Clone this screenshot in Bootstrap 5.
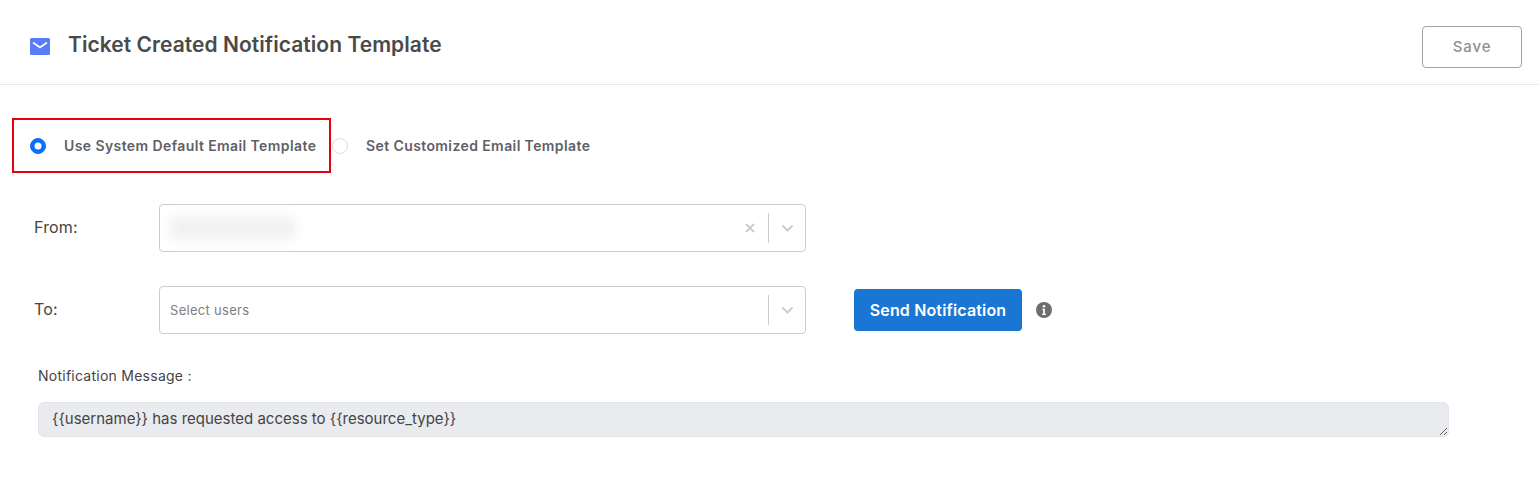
<!DOCTYPE html>
<html lang="en">
<head>
<meta charset="utf-8">
<title>Ticket Created Notification Template</title>
<link href="https://cdn.jsdelivr.net/npm/bootstrap@5.3.0/dist/css/bootstrap.min.css" rel="stylesheet">
<style>
body{font-family:"Inter","Noto Sans","Liberation Sans",sans-serif;background:#fff;color:#3f3f3f;height:500px;overflow:hidden}
.page-head{height:85px;padding:26px 17px 0 30px;border-bottom:1px solid #e9e9e9}
.head-title{font-size:21px;font-weight:600;color:#4a4a4a;margin:1px 0 0 18px;line-height:36px;letter-spacing:.05px}
.mail-ico{width:20px;height:17px;margin-top:12px;display:block}
.save-btn{width:100px;height:42px;border:1px solid #a3a3a3;border-radius:4px;background:#fff;color:#8f8f8f;font-size:15px;font-weight:500;letter-spacing:.9px;padding:0}
.radio-row{padding:33px 0 0 12px;height:119px}
.radio-box{width:319px;height:55px;border:2px solid #e8000f;padding-left:16px}
.radio-free{padding-left:1px;height:55px}
.form-check-input.radio-in{width:16px;height:16px;margin:0;flex:none;border-color:#dedede}
.radio-in:checked{background-color:#0d6efd;border-color:#0d6efd}
.radio-text{font-size:14px;font-weight:600;color:#5f5f68;margin-left:18px;letter-spacing:.4px;white-space:nowrap}
.field-row{padding-left:34px;height:48px}
.field-gap{margin-top:34px}
.field-label{width:125px;font-size:16px;color:#444;flex:none;padding-bottom:2px;letter-spacing:.15px}
.fake-select{width:647px;height:48px;border:1px solid #ccc;border-radius:4px;background:#fff;padding-left:10px;flex:none}
.blur-text{width:126px;height:22px;background:#ececec;filter:blur(6px);opacity:.75}
.ph-text{font-size:13px;color:#808080;letter-spacing:.3px;padding-top:2px}
.sel-tail{margin-left:auto;height:100%}
.sel-x{width:12px;height:12px;margin-right:12px;display:block}
.sel-sep{width:1px;height:30px;background:#ccc}
.sel-chev{width:13px;height:8px;margin:0 11px 0 12px;display:block}
.send-btn{width:168px;height:42px;margin-left:48px;background:#1976d2;border:0;border-radius:4px;color:#fff;font-size:16px;font-weight:600;letter-spacing:.15px;padding:0}
.info-ico{width:16px;height:16px;margin-left:14px;display:block}
.msg-wrap{padding:32px 0 0 38px}
.msg-label{font-size:14px;color:#444;margin:0 0 16px;line-height:20px;display:block;letter-spacing:.25px}
textarea.form-control.msg-area{width:1411px;height:35px;min-height:35px;padding:5px 13px;font-size:15px;line-height:22px;color:#444;background:#e9ebee;border:1px solid #e2e4e8;border-radius:6px;overflow:hidden}
</style>
</head>
<body>
<header class="page-head d-flex justify-content-between">
  <div class="d-flex align-items-start">
    <svg class="mail-ico" viewBox="0 0 20 17" aria-hidden="true"><rect width="20" height="17" rx="1.5" fill="#5b7cf7"/><path d="M3 4.5l7 5 7-5" fill="none" stroke="#fff" stroke-width="1.8"/></svg>
    <h1 class="head-title">Ticket Created Notification Template</h1>
  </div>
  <button type="button" class="save-btn">Save</button>
</header>
<div class="radio-row d-flex align-items-start">
  <label class="radio-box d-flex align-items-center">
    <input class="form-check-input radio-in" type="radio" name="tpl" checked>
    <span class="radio-text">Use System Default Email Template</span>
  </label>
  <label class="radio-free d-flex align-items-center">
    <input class="form-check-input radio-in" type="radio" name="tpl">
    <span class="radio-text">Set Customized Email Template</span>
  </label>
</div>
<div class="field-row d-flex align-items-center">
  <label class="field-label">From:</label>
  <div class="fake-select d-flex align-items-center">
    <div class="blur-text"></div>
    <div class="sel-tail d-flex align-items-center">
      <svg class="sel-x" viewBox="0 0 12 12" aria-hidden="true"><path d="M2 2l8 8M10 2l-8 8" stroke="#ccc" stroke-width="2" fill="none"/></svg>
      <span class="sel-sep"></span>
      <svg class="sel-chev" viewBox="0 0 13 8" aria-hidden="true"><path d="M1.5 1.5l5 5 5-5" stroke="#ccc" stroke-width="2" fill="none"/></svg>
    </div>
  </div>
</div>
<div class="field-row field-gap d-flex align-items-center">
  <label class="field-label">To:</label>
  <div class="fake-select d-flex align-items-center">
    <span class="ph-text">Select users</span>
    <div class="sel-tail d-flex align-items-center">
      <span class="sel-sep"></span>
      <svg class="sel-chev" viewBox="0 0 13 8" aria-hidden="true"><path d="M1.5 1.5l5 5 5-5" stroke="#ccc" stroke-width="2" fill="none"/></svg>
    </div>
  </div>
  <button type="button" class="send-btn">Send Notification</button>
  <svg class="info-ico" viewBox="0 0 16 16" aria-hidden="true"><circle cx="8" cy="8" r="8" fill="#6e6e6e"/><circle cx="8" cy="4.2" r="1.3" fill="#fff"/><path d="M6.3 6.7h2.6v5h1v1.2H6.2v-1.2h1v-3.8h-.9z" fill="#fff"/></svg>
</div>
<div class="msg-wrap">
  <label class="msg-label">Notification Message :</label>
  <textarea class="form-control msg-area" disabled>{{username}} has requested access to {{resource_type}}</textarea>
</div>
<script src="https://cdn.jsdelivr.net/npm/bootstrap@5.3.0/dist/js/bootstrap.bundle.min.js"></script>
</body>
</html>
